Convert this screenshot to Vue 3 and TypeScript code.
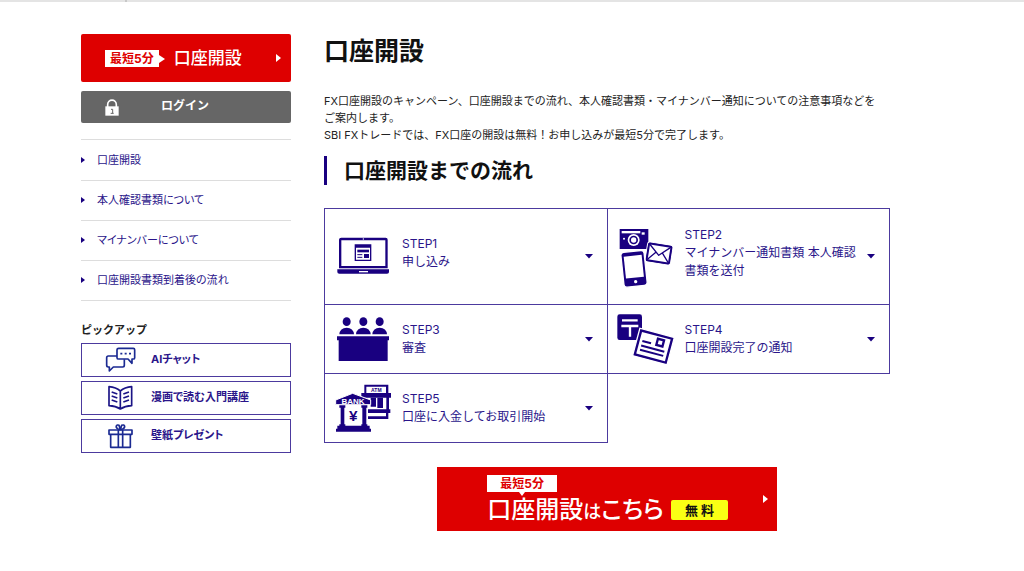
<script setup lang="ts">
interface LinkItem {
  label: string
  href: string
}

interface Step {
  id: string
  title: string
  text: string
  viewBox: string
}

const navItems: LinkItem[] = [
  { label: '口座開設', href: '#open' },
  { label: '本人確認書類について', href: '#identity' },
  { label: 'マイナンバーについて', href: '#mynumber' },
  { label: '口座開設書類到着後の流れ', href: '#arrival' },
]

const pickups: LinkItem[] = [
  { label: 'AIチャット', href: '#chat' },
  { label: '漫画で読む入門講座', href: '#manga' },
  { label: '壁紙プレゼント', href: '#wallpaper' },
]

const steps: Step[] = [
  { id: 'step1', title: 'STEP1', text: '申し込み', viewBox: '54 78 168 180' },
  { id: 'step2', title: 'STEP2', text: 'マイナンバー通知書類 本人確認書類を送付', viewBox: '57 78 168 180' },
  { id: 'step3', title: 'STEP3', text: '審査', viewBox: '54 26 168 180' },
  { id: 'step4', title: 'STEP4', text: '口座開設完了の通知', viewBox: '57 26 168 180' },
  { id: 'step5', title: 'STEP5', text: '口座に入金してお取引開始', viewBox: '54 233 168 180' },
]
</script>

<template>
  <div class="page">
    <div class="topline"><span class="tick"></span></div>
    <div class="layout">
      <aside class="side">
        <a class="open-btn" href="#apply">
          <span class="tag">最短5分</span>
          <span class="open-label">口座開設</span>
          <svg class="arrow-right" viewBox="0 0 5 8" aria-hidden="true"><path d="M0 0L5 4L0 8Z" /></svg>
        </a>
        <a class="login-btn" href="#login">
          <svg class="lock" viewBox="0 0 42 51" aria-hidden="true">
            <path d="M8 24V17C8 -1 34 -1 34 17V24" fill="none" stroke="#fff" stroke-width="5" />
            <rect x="1" y="22" width="40" height="28" fill="#fff" />
            <path d="M18 31H23V43M17 43H26" fill="none" stroke="#666" stroke-width="3" />
          </svg>
          <span class="login-label">ログイン</span>
        </a>
        <nav>
          <ul class="nav">
            <li v-for="item in navItems" :key="item.href">
              <a :href="item.href">
                <svg class="nav-arrow" viewBox="0 0 4 6" aria-hidden="true"><path d="M0 0L4 3L0 6Z" /></svg>
                {{ item.label }}
              </a>
            </li>
          </ul>
        </nav>
        <h2 class="pickup-title">ピックアップ</h2>
        <div class="pickups">
          <a v-for="(p, i) in pickups" :key="p.href" :href="p.href" class="pickup">
            <svg class="pickup-icon" viewBox="0 0 90 78" aria-hidden="true">
              <g v-if="i === 0" fill="none" stroke="#1b2a92" stroke-width="5" stroke-linejoin="round">
                <path d="M38 4H82Q86 4 86 8V32Q86 36 82 36H78V49L66 36H38Q33 36 33 32V8Q33 4 38 4Z" />
                <path d="M33 27H7Q2 27 2 32V55Q2 60 7 60H10V72L22 60H50Q55 60 55 55V37" />
                <path d="M43 20H49M56 20H62M69 20H75" />
              </g>
              <g v-else-if="i === 1" fill="none" stroke="#1b1486" stroke-width="5" stroke-linejoin="round">
                <path d="M9 5Q30 7 43 18Q56 7 77 5V62Q57 63 43 72Q29 63 9 62ZM43 18V70" />
                <path d="M17 21L34 27M17 33L34 39M17 45L34 51M69 21L52 27M69 33L52 39M69 45L52 51" />
              </g>
              <g v-else fill="none" stroke="#1b2a92" stroke-width="5" stroke-linejoin="round">
                <rect x="9" y="21" width="69" height="13" />
                <path d="M14 34V73H73V34M37 21V73M50 21V73M43 20L36 18C26 12 32 3 39 7L43 20L47 7C56 3 60 12 50 18Z" />
              </g>
            </svg>
            <span>{{ p.label }}</span>
          </a>
        </div>
      </aside>

      <main class="main">
        <h1>口座開設</h1>
        <p class="lead">
          FX口座開設のキャンペーン、口座開設までの流れ、本人確認書類・マイナンバー通知についての注意事項などを<br />ご案内します。<br />SBI FXトレードでは、FX口座の開設は無料！お申し込みが最短5分で完了します。
        </p>
        <h2 class="flow-title">口座開設までの流れ</h2>
        <div class="steps">
          <a v-for="s in steps" :key="s.id" :href="'#' + s.id" class="step">
            <svg class="step-icon" :viewBox="s.viewBox" aria-hidden="true">
              <template v-if="s.id === 'step1'">
                <path fill-rule="evenodd" d="M70 113H203Q209 113 209 119V205H63V119Q63 113 70 113ZM70 121V198H202V121Z" />
                <path d="M58 208H213V216Q213 221 207 221H64Q58 221 58 216Z" />
                <rect x="123" y="213" width="27" height="4" fill="#fff" />
                <circle cx="136" cy="117" r="2" fill="#fff" />
                <path fill-rule="evenodd" d="M110 133H160V183H110ZM114 143V179H156V143Z" />
                <rect x="118" y="149" width="35" height="8" />
                <rect x="138" y="162" width="15" height="12" />
                <path d="M118 164H133M118 172H133" stroke="#190080" stroke-width="3" />
              </template>
              <template v-else-if="s.id === 'step2'">
                <rect x="59" y="87" width="86" height="60" />
                <rect x="65" y="93" width="56" height="7" fill="#fff" />
                <rect x="125" y="97" width="9" height="7" fill="#fff" />
                <circle cx="101" cy="120" r="18" fill="#fff" />
                <circle cx="101" cy="120" r="13" />
                <circle cx="101" cy="120" r="8" fill="#fff" />
                <circle cx="72" cy="116" r="3" fill="#fff" />
                <g transform="rotate(9 177 161)" stroke="#fff" stroke-width="4">
                  <rect x="139" y="131" width="76" height="59" rx="6" />
                </g>
                <g transform="rotate(9 177 161)" fill="none" stroke="#190080" stroke-width="6" stroke-linejoin="round">
                  <rect x="143" y="135" width="68" height="51" rx="3" fill="#fff" />
                  <path d="M144 136L177 166L210 136M144 185L167 158M210 185L187 158" stroke-width="4" />
                </g>
                <g transform="rotate(-6 102 206)">
                  <rect x="67" y="154" width="70" height="105" rx="9" stroke="#fff" stroke-width="4" />
                  <rect x="75" y="167" width="54" height="66" fill="#fff" />
                  <circle cx="103" cy="245" r="5" fill="#fff" />
                </g>
              </template>
              <template v-else-if="s.id === 'step3'">
                <template v-for="x in [86, 136, 185]" :key="x">
                  <ellipse :cx="x" cy="64" rx="12" ry="13" />
                  <path :d="`M${x - 22} 102Q${x - 20} 82 ${x} 82Q${x + 20} 82 ${x + 22} 102Z`" />
                </template>
                <path d="M57 108H213V120H209V182H62V120H57Z" />
              </template>
              <template v-else-if="s.id === 'step4'">
                <rect x="52" y="42" width="74" height="77" rx="7" />
                <path d="M66 60H113M64 77H115M90 77V109" fill="none" stroke="#fff" stroke-width="7" />
                <g transform="rotate(15 160 138)">
                  <rect x="107" y="96" width="107" height="85" stroke="#fff" stroke-width="4" />
                  <rect x="116" y="105" width="89" height="67" fill="#fff" />
                  <path fill-rule="evenodd" d="M164 109H190V135H164ZM171 116V128H183V116Z" />
                  <path d="M124 131H151M124 145H196M124 158H196" stroke="#190080" stroke-width="6" />
                </g>
              </template>
              <template v-else>
                <path fill-rule="evenodd" d="M139 253H211V278H219V292H213V327H217V338H211V356H150V348H204V338H150V327H205V292H130V278H139ZM145 259V278H204V259Z" />
                <text x="175" y="276" class="atm">ATM</text>
                <path d="M158 292H174V319H158ZM178 292H195V323H178Z" />
                <path d="M104 279L158 299V313H53V299Z" stroke="#fff" stroke-width="3" />
                <text x="105" y="310" class="bank">BANK</text>
                <path d="M64 315H82V322H79V372H82V377H64V372H68V322H64ZM130 315H148V322H145V372H148V377H130V372H133V322H130Z" />
                <text x="106" y="362" class="yen">¥</text>
                <path d="M58 376H155V385H159V394H54V385H58Z" />
              </template>
            </svg>
            <span class="step-text"><span>{{ s.title }}</span><span>{{ s.text }}</span></span>
            <svg class="arrow-down" viewBox="0 0 8 5" aria-hidden="true"><path d="M0 0H8L4 4.6Z" /></svg>
          </a>
        </div>
        <a class="cta" href="#apply">
          <span class="cta-copy">
            <span class="cta-tag">最短5分</span>
            <span class="cta-line">
              <span class="cta-text">口座開設<span class="small">は</span>こちら</span>
              <span class="free">無 料</span>
            </span>
          </span>
          <svg class="arrow-right" viewBox="0 0 5 8" aria-hidden="true"><path d="M0 0L5 4L0 8Z" /></svg>
        </a>
      </main>
    </div>
  </div>
</template>

<style>
body {
  margin: 0;
  background: #fff;
}
</style>

<style scoped>
.page {
  font-family: Inter, "Noto Sans CJK JP", sans-serif;
  color: #222;
}
.page * {
  box-sizing: border-box;
}
a {
  color: #2a158a;
  text-decoration: none;
}
svg {
  display: block;
  flex: none;
  fill: #190080;
  overflow: visible;
}
.topline {
  height: 2px;
  background: #e4e4e4;
  padding-left: 125px;
}
.tick {
  display: block;
  width: 2px;
  height: 2px;
  background: #c8c8c8;
}
.layout {
  display: grid;
  grid-template-columns: 210px minmax(0, 1fr);
  column-gap: 33px;
  padding: 32px 134px 32px 81px;
}
.open-btn {
  display: flex;
  align-items: center;
  height: 48px;
  padding: 0 10px 0 24px;
  border-radius: 2px;
  background: #de0000;
  color: #fff;
}
.tag {
  position: relative;
  padding: 0 5px;
  background: #fff;
  color: #de0000;
  font-size: 12px;
  line-height: 17px;
  font-weight: 700;
}
.tag::after {
  content: "";
  position: absolute;
  left: 100%;
  top: 5px;
  border: 4px solid transparent;
  border-left: 6px solid #fff;
  border-right: 0;
}
.open-label {
  flex: 1;
  margin-left: 15px;
  font-size: 17px;
  line-height: 24px;
  font-weight: 500;
}
.arrow-right {
  width: 5px;
  height: 8px;
  fill: #fff;
}
.login-btn {
  display: flex;
  align-items: center;
  height: 32px;
  margin-top: 9px;
  padding-left: 24px;
  border-radius: 2px;
  background: #666;
  color: #fff;
  font-size: 12px;
  line-height: 16px;
  font-weight: 700;
}
.lock {
  width: 14px;
  height: 17px;
}
.login-label {
  margin-left: 42px;
  padding-bottom: 2px;
}
.nav {
  list-style: none;
  margin: 16px 0 0;
  padding: 0;
  border-top: 1px solid #ddd;
}
.nav li {
  border-bottom: 1px solid #ddd;
}
.nav a {
  display: flex;
  align-items: center;
  gap: 12px;
  min-height: 40px;
  padding-bottom: 1px;
  font-size: 11px;
  line-height: 16px;
  font-feature-settings: "palt";
}
.nav li + li a {
  min-height: 39px;
}
.nav-arrow {
  width: 4px;
  height: 6px;
}
.pickup-title {
  margin: 21px 0 5px;
  font-size: 11px;
  line-height: 16px;
  font-weight: 700;
}
.pickups {
  display: grid;
  gap: 4px;
}
.pickup {
  display: flex;
  align-items: center;
  gap: 15px;
  height: 34px;
  padding-left: 24px;
  border: 1px solid #4c3a9e;
  font-size: 11px;
  line-height: 16px;
  font-weight: 700;
  font-feature-settings: "palt";
}
.pickup > span {
  padding-bottom: 2px;
}
.pickup-icon {
  width: 30px;
  height: 26px;
}
.main h1 {
  margin: 0;
  font-size: 25px;
  line-height: 34px;
  font-weight: 700;
  color: #111;
}
.lead {
  margin: 25px 0 0;
  font-size: 11px;
  line-height: 17px;
}
.flow-title {
  margin: 12px 0 0;
  padding-left: 17px;
  border-left: 3px solid #190080;
  font-size: 21px;
  line-height: 29px;
  font-weight: 700;
  color: #111;
}
.steps {
  display: grid;
  grid-template-columns: 1fr 1fr;
  grid-template-rows: 97px;
  grid-auto-rows: 69px;
  margin-top: 23px;
  background: linear-gradient(#4c3a9e, #4c3a9e) top / 100% 1px no-repeat;
  border-left: 1px solid #4c3a9e;
}
.step {
  display: flex;
  align-items: center;
  padding: 0 14px 0 11px;
  border: solid #4c3a9e;
  border-width: 0 1px 1px 0;
  font-size: 12px;
  line-height: 18px;
}
.step-icon {
  width: 56px;
  height: 60px;
}
.step-text {
  flex: 1;
  margin: 0 4px 0 10px;
}
.step:nth-child(-n + 2) .step-text {
  padding-bottom: 6px;
}
.step-text > span {
  display: block;
}
.arrow-down {
  width: 8px;
  height: 5px;
}
.atm,
.bank,
.yen {
  font-family: "Liberation Sans", sans-serif;
  text-anchor: middle;
  font-weight: 700;
}
.atm {
  font-size: 15px;
}
.bank {
  font-size: 24px;
  fill: #fff;
}
.yen {
  font-size: 46px;
}
.cta {
  display: flex;
  align-items: center;
  justify-content: space-between;
  width: 60%;
  height: 64px;
  margin: 24px auto 0;
  padding: 0 9px 0 50px;
  background: #de0000;
  color: #fff;
}
.cta-copy {
  padding-top: 5px;
}
.cta-tag {
  position: relative;
  display: block;
  width: 70px;
  background: #fff;
  color: #de0000;
  font-size: 12px;
  line-height: 17px;
  font-weight: 700;
  text-align: center;
}
.cta-tag::after {
  content: "";
  position: absolute;
  left: 32px;
  top: 100%;
  border: 3px solid transparent;
  border-top: 4px solid #fff;
  border-bottom: 0;
}
.cta-line {
  display: flex;
  align-items: center;
  gap: 7px;
}
.cta-text {
  padding-top: 2px;
  font-size: 24px;
  line-height: 32px;
  font-weight: 500;
  font-feature-settings: "palt";
}
.small {
  font-size: 18px;
}
.free {
  width: 57px;
  border-radius: 2px;
  background: #faff14;
  color: #111;
  font-size: 13px;
  line-height: 20px;
  font-weight: 700;
  text-align: center;
}
</style>
